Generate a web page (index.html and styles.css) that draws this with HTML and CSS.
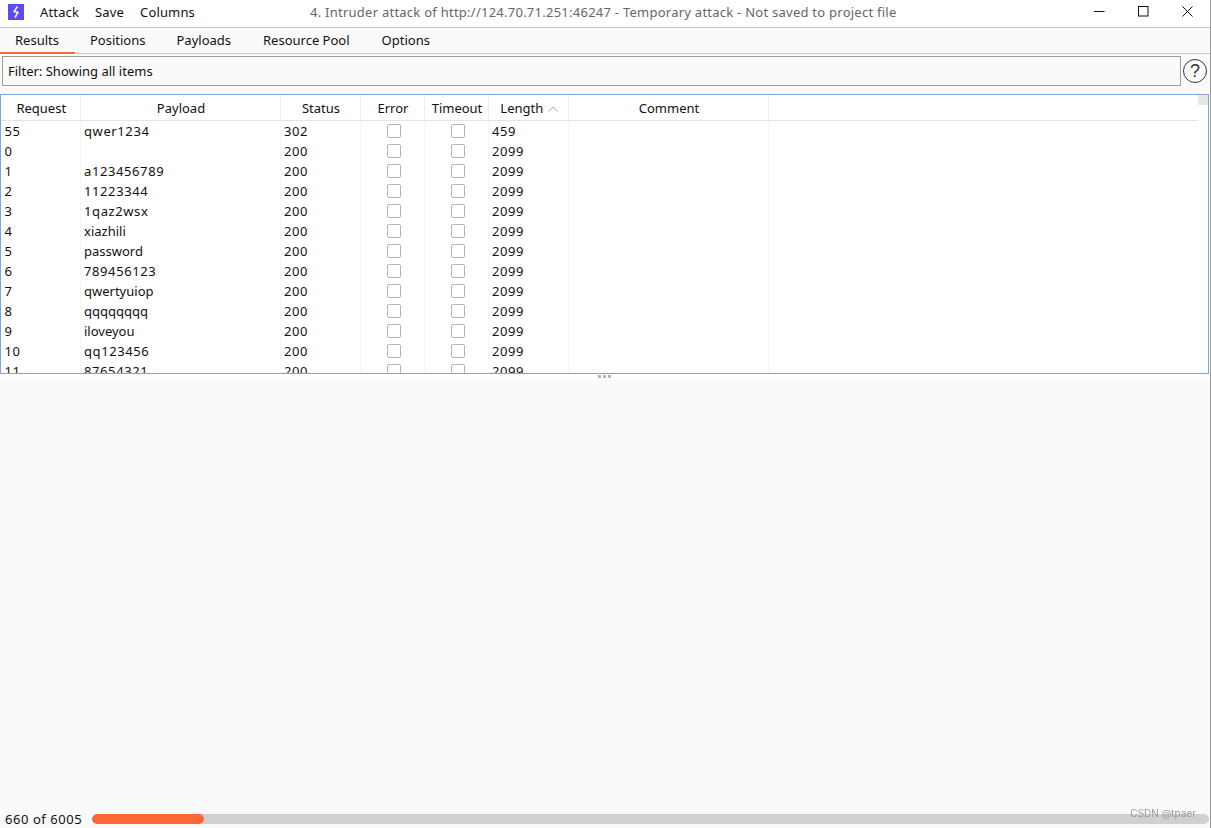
FILE: index.html
```html
<!DOCTYPE html>
<html lang="en">
<head>
  <meta charset="UTF-8" />
  <title>Intruder attack</title>
  <link rel="stylesheet" href="styles.css">
</head>
<body>
  <div class="window">
    <div class="titlebar">
      <div class="logo">
        <svg width="16" height="16" viewBox="0 0 16 16"><rect width="16" height="16" fill="#5b4cf0"/><path d="M9.5 2.5 6.2 7.4 9.8 8.6 7 13.5" stroke="#efecff" stroke-width="1.7" fill="none"/></svg>
      </div>
      <div class="menu">
        <span>Attack</span>
        <span>Save</span>
        <span>Columns</span>
      </div>
      <div class="title">4. Intruder attack of http://124.70.71.251:46247 - Temporary attack - Not saved to project file</div>
      <div class="controls">
        <svg width="11" height="11" viewBox="0 0 11 11"><path d="M0 5.5H10.5" stroke="#111" fill="none"/></svg>
        <svg width="11" height="11" viewBox="0 0 11 11"><rect x=".5" y=".5" width="9.5" height="9.5" stroke="#111" fill="none"/></svg>
        <svg width="11" height="11" viewBox="0 0 11 11"><path d="M.5.5 10.5 10.5M10.5.5.5 10.5" stroke="#111" fill="none"/></svg>
      </div>
    </div>

    <div class="tabs">
      <div class="tab active">Results</div>
      <div class="tab positions">Positions</div>
      <div class="tab">Payloads</div>
      <div class="tab">Resource Pool</div>
      <div class="tab">Options</div>
    </div>

    <div class="filter-row">
      <div class="filter">Filter: Showing all items</div>
      <div class="help">?</div>
    </div>

    <div class="results">
      <div class="scroll-thumb"></div>
      <table>
        <colgroup>
          <col class="c-req"><col class="c-pay"><col class="c-status"><col class="c-err"><col class="c-time"><col class="c-len"><col class="c-comment"><col>
        </colgroup>
        <thead>
          <tr>
            <th>Request</th>
            <th>Payload</th>
            <th>Status</th>
            <th>Error</th>
            <th>Timeout</th>
            <th>Length <svg class="sort" width="10" height="6" viewBox="0 0 10 6"><path d="M.5 5.5 5 1 9.5 5.5" stroke="#aaa" fill="none"/></svg></th>
            <th>Comment</th>
            <th class="blank"></th>
          </tr>
        </thead>
        <tbody>
          <tr><td class="num">55</td><td class="num">qwer1234</td><td class="num">302</td><td><i class="check"></i></td><td><i class="check"></i></td><td class="num">459</td><td></td><td class="blank"></td></tr>
          <tr><td class="num">0</td><td></td><td class="num">200</td><td><i class="check"></i></td><td><i class="check"></i></td><td class="num">2099</td><td></td><td class="blank"></td></tr>
          <tr><td class="num">1</td><td class="num">a123456789</td><td class="num">200</td><td><i class="check"></i></td><td><i class="check"></i></td><td class="num">2099</td><td></td><td class="blank"></td></tr>
          <tr><td class="num">2</td><td class="num">11223344</td><td class="num">200</td><td><i class="check"></i></td><td><i class="check"></i></td><td class="num">2099</td><td></td><td class="blank"></td></tr>
          <tr><td class="num">3</td><td class="num">1qaz2wsx</td><td class="num">200</td><td><i class="check"></i></td><td><i class="check"></i></td><td class="num">2099</td><td></td><td class="blank"></td></tr>
          <tr><td class="num">4</td><td>xiazhili</td><td class="num">200</td><td><i class="check"></i></td><td><i class="check"></i></td><td class="num">2099</td><td></td><td class="blank"></td></tr>
          <tr><td class="num">5</td><td>password</td><td class="num">200</td><td><i class="check"></i></td><td><i class="check"></i></td><td class="num">2099</td><td></td><td class="blank"></td></tr>
          <tr><td class="num">6</td><td class="num">789456123</td><td class="num">200</td><td><i class="check"></i></td><td><i class="check"></i></td><td class="num">2099</td><td></td><td class="blank"></td></tr>
          <tr><td class="num">7</td><td>qwertyuiop</td><td class="num">200</td><td><i class="check"></i></td><td><i class="check"></i></td><td class="num">2099</td><td></td><td class="blank"></td></tr>
          <tr><td class="num">8</td><td>qqqqqqqq</td><td class="num">200</td><td><i class="check"></i></td><td><i class="check"></i></td><td class="num">2099</td><td></td><td class="blank"></td></tr>
          <tr><td class="num">9</td><td>iloveyou</td><td class="num">200</td><td><i class="check"></i></td><td><i class="check"></i></td><td class="num">2099</td><td></td><td class="blank"></td></tr>
          <tr><td class="num">10</td><td class="num">qq123456</td><td class="num">200</td><td><i class="check"></i></td><td><i class="check"></i></td><td class="num">2099</td><td></td><td class="blank"></td></tr>
          <tr><td class="num">11</td><td class="num">87654321</td><td class="num">200</td><td><i class="check"></i></td><td><i class="check"></i></td><td class="num">2099</td><td></td><td class="blank"></td></tr>
        </tbody>
      </table>
    </div>

    <div class="splitter"><span></span><span></span><span></span></div>
    <div class="detail"></div>

    <div class="statusbar">
      <span class="count">660 of 6005</span>
      <div class="progress"><div class="progress-fill" style="width: 10%"></div></div>
    </div>
    <div class="watermark">CSDN @tpaer</div>
  </div>
</body>
</html>
```

FILE: styles.css
```css
:root {
  --line: #c9c9c9;
  --panel: #fafafa;
  --cell-line: #f0f0f0;
  --blue: #7aa7d8;
  --orange: #ff6633;
}

* {
  margin: 0;
  padding: 0;
  box-sizing: border-box;
}

body {
  background: #fff;
  color: #111;
  font-family: "Noto Sans", "Open Sans", sans-serif;
  font-size: 13px;
}

.window {
  position: relative;
  height: 828px;
  display: flex;
  flex-direction: column;
  border-right: 1px solid #999;
  overflow: hidden;
}

.titlebar {
  height: 28px;
  flex: none;
  display: flex;
  align-items: center;
  padding-left: 8px;
  background: #fff;
  border-bottom: 1px solid var(--line);
}

.logo {
  width: 16px;
  height: 16px;
  margin-top: -4px;
  display: flex;
}

.menu {
  display: flex;
  gap: 16px;
  margin-left: 16px;
  margin-top: -3px;
  letter-spacing: .15px;
}

.title {
  margin-left: 115px;
  margin-top: -3px;
  color: #666;
  white-space: nowrap;
  letter-spacing: .25px;
}

.controls {
  margin-left: auto;
  margin-right: 17px;
  margin-top: -4px;
  display: flex;
  gap: 33px;
}

.tabs {
  height: 26px;
  flex: none;
  display: flex;
  background: var(--panel);
  border-bottom: 1px solid var(--line);
}

.tab {
  padding: 3px 15px 0 15px;
  margin-right: 2px;
  height: 26px;
}

.tab.active {
  width: 75px;
  border-bottom: 2px solid var(--orange);
  margin-right: 0;
}

.tab.positions {
  margin-right: 1px;
}

.filter-row {
  height: 40px;
  flex: none;
  display: flex;
  gap: 2px;
  padding: 2px 3px 0 2px;
  background: var(--panel);
}

.filter {
  flex: 1;
  height: 30px;
  padding: 5px 5px;
  border: 1px solid #9c9c9c;
}

.help {
  width: 24px;
  height: 24px;
  margin-top: 3px;
  border: 1px solid #333;
  border-radius: 50%;
  text-align: center;
  font-family: "Liberation Sans", sans-serif;
  font-size: 18px;
  line-height: 22px;
  color: #333;
}

.results {
  position: relative;
  height: 280px;
  flex: none;
  background: #fff;
  border: 1px solid var(--blue);
  margin-right: 1px;
  overflow: hidden;
}

.scroll-thumb {
  position: absolute;
  right: 0;
  top: 0;
  width: 10px;
  height: 10px;
  background: #e6e6e6;
}

table {
  width: 1197px;
  table-layout: fixed;
  border-collapse: collapse;
}

.c-req { width: 79px; }
.c-pay { width: 200px; }
.c-status { width: 80px; }
.c-err { width: 64px; }
.c-time { width: 64px; }
.c-len { width: 80px; }
.c-comment { width: 200px; }

th {
  height: 25px;
  padding: 2px 0 0 2px;
  font-weight: 400;
  border-right: 1px solid var(--cell-line);
  border-bottom: 1px solid #e4e4e4;
  white-space: nowrap;
}

th:nth-child(6) {
  padding-left: 2px;
}

td {
  height: 20px;
  padding-left: 3.5px;
  border-right: 1px solid #f6f6f6;
  white-space: nowrap;
  line-height: 20px;
}

td.num {
  letter-spacing: .6px;
}

td:nth-child(4),
td:nth-child(5) {
  text-align: center;
  padding-left: 3px;
}

th.blank,
td.blank {
  border-right: 0;
}

.sort {
  margin-left: 1px;
  vertical-align: 1px;
}

.check {
  display: inline-block;
  width: 14px;
  height: 14px;
  margin-top: 3px;
  vertical-align: top;
  background: #fff;
  border: 1px solid #b4b4b4;
  border-radius: 2px;
}

.splitter {
  height: 5px;
  flex: none;
  display: flex;
  justify-content: center;
  align-items: center;
  gap: 2px;
  padding-right: 2px;
  background: #fff;
}

.splitter span {
  width: 3px;
  height: 3px;
  background: #b5b5b5;
}

.detail {
  flex: 1;
  background: var(--panel);
}

.statusbar {
  height: 28px;
  flex: none;
  display: flex;
  align-items: center;
  gap: 10px;
  padding: 0 1px 0 5px;
  background: var(--panel);
}

.count {
  letter-spacing: .55px;
  margin-top: 9px;
}

.progress {
  flex: 1;
  height: 10px;
  margin-top: 10px;
  background: #d0d0d0;
  border-radius: 5px;
  overflow: hidden;
}

.progress-fill {
  height: 100%;
  background: var(--orange);
  border-radius: 5px;
}

.watermark {
  position: absolute;
  right: 14px;
  bottom: 9px;
  font-size: 10px;
  color: #999;
  font-family: "Inter", "Liberation Sans", sans-serif;
  filter: blur(.4px);
}
```
